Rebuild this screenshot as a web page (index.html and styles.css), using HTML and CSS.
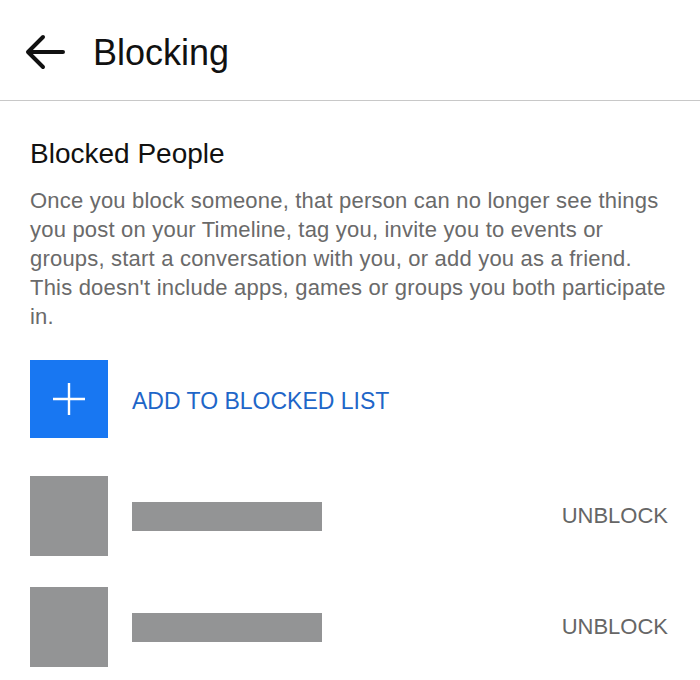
FILE: index.html
```html
<!DOCTYPE html>
<html lang="en">
<head>
    <meta charset="UTF-8">
    <title>Blocking</title>
    <link rel="stylesheet" href="styles.css">
</head>
<body>
    <div class="topbar">
        <svg class="back" width="44" height="40" viewBox="0 0 44 40">
            <path d="M40 20H6M20 5L5 20L20 35" fill="none" stroke="#111" stroke-width="4" stroke-linecap="round" stroke-linejoin="round"/>
        </svg>
        <h1>Blocking</h1>
    </div>
    <div class="content">
        <h2>Blocked People</h2>
        <p class="info">Once you block someone, that person can no longer see things<br>you post on your Timeline, tag you, invite you to events or<br>groups, start a conversation with you, or add you as a friend.<br>This doesn't include apps, games or groups you both participate<br>in.</p>
        <div class="add-row">
            <div class="add-icon">
                <svg width="34" height="34" viewBox="0 0 34 34">
                    <path d="M17 1V33M1 17H33" stroke="#fff" stroke-width="2.4"/>
                </svg>
            </div>
            <span class="add-label">ADD TO BLOCKED LIST</span>
        </div>
        <div class="person">
            <div class="avatar"></div>
            <div class="name-bar"></div>
            <span class="unblock">UNBLOCK</span>
        </div>
        <div class="person">
            <div class="avatar"></div>
            <div class="name-bar"></div>
            <span class="unblock">UNBLOCK</span>
        </div>
    </div>
</body>
</html>
```
FILE: styles.css
```css
body { margin: 0; font-family: "Liberation Sans", Arial, sans-serif; background: #fff; width: 700px; height: 680px; overflow: hidden; }
.topbar { height: 100px; display: flex; align-items: center; border-bottom: 1px solid #c8c8c8; padding-left: 23px; }
.back { margin-top: 4px; }
h1 { margin: 6px 0 0 26px; font-size: 36px; font-weight: normal; color: #111; }
.content { padding: 0 30px; }
h2 { margin: 37px 0 0; font-size: 28px; font-weight: normal; color: #111; line-height: 32px; }
.info { margin: 16px 0 0; font-size: 22px; line-height: 29px; color: #6a6a6a; letter-spacing: 0.2px; }
.add-row { display: flex; align-items: center; margin-top: 29px; }
.add-icon { width: 78px; height: 78px; background: #1877f2; display: flex; align-items: center; justify-content: center; }
.add-label { margin: 4px 0 0 24px; font-size: 23px; color: #1e66c8; }
.person { display: flex; align-items: center; margin-top: 38px; }
.person + .person { margin-top: 31px; }
.avatar { width: 78px; height: 80px; background: #939495; }
.name-bar { width: 190px; height: 29px; background: #939495; margin-left: 24px; }
.unblock { margin-left: auto; margin-right: 2px; font-size: 22px; color: #666; }
```
